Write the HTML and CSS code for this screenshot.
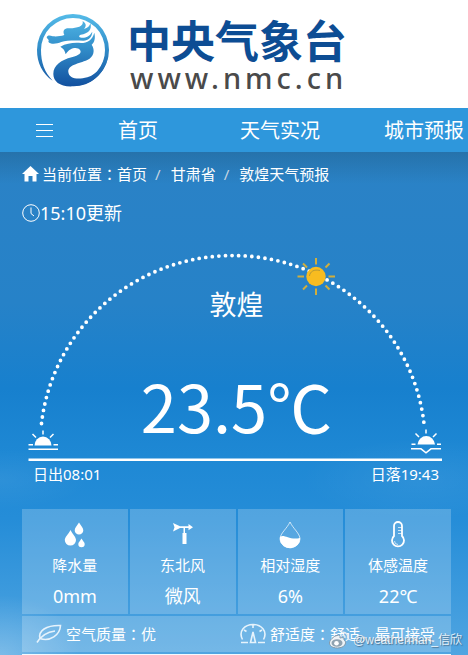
FILE: index.html
```html
<!DOCTYPE html>
<html lang="zh-CN">
<head>
<meta charset="utf-8">
<meta name="viewport" content="width=device-width, initial-scale=1">
<title>敦煌天气预报</title>
<link rel="stylesheet" href="styles.css">
</head>
<body>
<header class="brand">
  <svg class="brand-mark" viewBox="108 39 222 222" aria-hidden="true">
    <defs>
      <linearGradient id="mark" gradientUnits="userSpaceOnUse" x1="0" y1="42" x2="0" y2="260">
        <stop offset="0" stop-color="#55bbe8"/>
        <stop offset=".45" stop-color="#3390cb"/>
        <stop offset="1" stop-color="#12509f"/>
      </linearGradient>
    </defs>
    <g fill="url(#mark)">
      <path d="M158 242C127 222 111 188 111 150A108 108 0 0 1 327 150A108 108 0 0 1 219 258L232 246A96 96 0 0 0 315 150A96 96 0 0 0 123 150C123 187 133 216 158 242Z"/>
      <path d="M181 140C200 130 220 127 243 129C262 129 277 120 283 98C287 115 283 127 275 134C286 150 282 170 262 180C235 192 204 194 205 216C207 236 232 240 262 232C292 222 308 200 315 168L324 172C312 225 270 260 219 259C180 261 160 245 160 222C160 195 185 180 215 172C238 166 246 158 240 150C232 140 210 142 197 163C195 152 190 145 181 140Z"/>
      <path d="M140 112C142 105 150 106 158 109C170 110 181 109 193 105C186 90 195 83 210 85C230 84 252 80 248 63C260 70 259 80 252 87C263 84 270 78 271 69C277 89 265 101 242 104C233 109 238 114 252 113C264 112 271 104 277 95C276 112 266 121 250 122C225 121 198 121 184 126C168 133 150 133 145 125C149 120 142 118 140 112Z"/>
    </g>
  </svg>
  <div class="brand-text">
    <h1 class="brand-name">中央气象台</h1>
    <p class="brand-url">www.nmc.cn</p>
  </div>
</header>

<nav class="menu">
  <button class="menu-toggle" type="button" aria-label="菜单">
    <svg viewBox="0 0 17 14" aria-hidden="true"><path d="M0 .500h17M0 6.500h17M0 12.500h17"/></svg>
  </button>
  <a href="#home">首页</a>
  <a href="#live">天气实况</a>
  <a href="#city">城市预报</a>
</nav>

<main class="weather">
  <div class="crumbs">
    <svg class="home" viewBox="0 0 17 16" aria-hidden="true"><path d="M8.500 0L17 8H14.500V15.500H10.500V10H6.500V15.500H2.500V8H0Z"/></svg>
    <span>当前位置<span class="colon" lang="zh-TW">：</span><a href="#home">首页</a></span>
    <span class="slash">/</span>
    <a href="#gansu">甘肃省</a>
    <span class="slash">/</span>
    <a href="#dunhuang">敦煌天气预报</a>
  </div>
  <p class="updated">
    <svg class="clock" viewBox="0 0 18 18" aria-hidden="true"><circle cx="9" cy="9" r="8.300"/><path d="M9 3.500V9.500L12 12"/></svg>15:10更新
  </p>

  <section class="dial">
    <svg class="dial-art" viewBox="22 240 429 222" aria-hidden="true">
      <path class="orbit" d="M41.500 423.500A192.500 189.500 0 0 1 424 423.500"/>
      <path class="horizon" d="M28.500 459.800H442"/>
      <g class="sun">
        <path d="M316 258v6.500M316 288.500v6.500M297.500 276.500h6.500M328.500 276.500h6.500M303 263.500l4 4M325.500 285.500l4 4M329.500 263.500l-4 4M307 285.500l-4 4"/>
        <circle cx="316" cy="276.500" r="9.700"/>
        <path class="sun-glint" d="M309.500 276C310 271.500 314 269 320 270.500"/>
      </g>
      <g class="rise">
        <path class="solid" d="M34.500 445.500A8.500 9 0 0 1 51.500 445.500Z"/>
        <path d="M43 430.500v4M32.500 434l3.500 3.500M53.500 434l-3.500 3.500M28.500 444.800h4.500M53.500 444.800h4.500M28.500 449.300h29.500"/>
      </g>
      <g class="rise">
        <path class="solid" d="M417.500 444.500A8.800 9.500 0 0 1 435 444.500Z"/>
        <path d="M426 429.500v4M415.500 433.500l3.500 3.500M436.500 433.500l-3.500 3.500M411.500 444.200h4M437 444.200h4M411 448.800h10l5 4 5-4h10"/>
      </g>
    </svg>
    <div class="reading">
      <h2 class="city">敦煌</h2>
      <p class="temp">23.5℃</p>
    </div>
  </section>
  <div class="sun-times"><span>日出08:01</span><span>日落19:43</span></div>

  <ul class="facts">
    <li>
      <svg viewBox="0 0 26 28" aria-hidden="true"><path class="solid" d="M8.500 9C11 14 14 16 14 19a5.600 5.600 0 0 1-11.200 0C2.800 16 6 14 8.500 9ZM17 1.500C19 5 21.300 7 21.300 9.200a4.300 4.300 0 0 1-8.600 0C12.700 7 15 5 17 1.500ZM19.500 17.500C21 20 22.700 21.500 22.700 23a3.200 3.200 0 0 1-6.400 0C16.300 21.500 18 20 19.500 17.500Z"/></svg>
      <span class="label">降水量</span><span class="value">0mm</span>
    </li>
    <li>
      <svg viewBox="0 0 26 28" aria-hidden="true"><path class="solid" d="M3 2L10 5.300H18.500V3L23 6.200L18.500 9.300V7H15V12H16.500V23H12.500V12H13.500V7H10L3 10.500L4.500 6.200Z"/></svg>
      <span class="label">东北风</span><span class="value">微风</span>
    </li>
    <li>
      <svg viewBox="0 0 26 28" aria-hidden="true"><path class="thin" d="M13 1C16 7.500 23 12.500 23 18a10 8.500 0 0 1-20 0C3 12.500 10 7.500 13 1Z"/><path class="solid" d="M3 16C7 12.500 12 19.500 23 17a10 9.200 0 0 1-20 2Z"/></svg>
      <span class="label">相对湿度</span><span class="value">6%</span>
    </li>
    <li>
      <svg viewBox="0 0 26 28" aria-hidden="true"><path class="thick" d="M9 15V5a4 4 0 0 1 8 0V15a6 6 0 1 1-8 0Z"/><path class="thin" d="M13 6.500h4M13 9.500h4M13 12.500h4M9.500 20a3.600 3.600 0 0 0 3.500 3.500"/></svg>
      <span class="label">体感温度</span><span class="value">22℃</span>
    </li>
  </ul>

  <div class="notes">
    <p>
      <svg viewBox="0 0 26 22" aria-hidden="true"><path d="M1 19.500C5 13 11 9 19 8M4 15.500C2 8 10 2 24.500 2.500C24 12 14 19 4 15.500"/></svg>
      <span>空气质量<span class="colon" lang="zh-TW">：</span>优</span>
    </p>
    <p>
      <svg viewBox="0 0 26 22" aria-hidden="true"><path d="M2.500 16.500C-2 8 5 1.500 13 1.500S28 8 23.500 16.500M1 19.500H8M18 19.500H25M13 2v3M4 7l2.500 1.500M22 7l-2.500 1.500M10.500 19.500L13 9L15.500 19.500Z"/></svg>
      <span>舒适度<span class="colon" lang="zh-TW">：</span>舒适，最可接受</span>
    </p>
  </div>
  <div class="forecast"></div>
</main>

<div class="credit">
  <svg viewBox="0 0 20 18" aria-hidden="true">
    <path class="credit-body" d="M8 4.500C10 3.500 11.500 4.500 11 7C14 6 15.500 7 15 9C18 10.500 17 16.800 8.500 17C3 17 .500 14.500 .500 12C.500 9 5 5 8 4.500Z"/>
    <ellipse class="credit-eye" cx="8" cy="12" rx="5.500" ry="3.800"/>
    <circle class="credit-pupil" cx="7.500" cy="12.300" r="2.300"/>
    <path class="credit-wave" d="M13 1.500C17 .500 19.500 4 18.300 7.500M13.500 4.500C15.500 4 16.300 5.300 15.800 7"/>
  </svg>
  <span>@weatherman_信欣</span>
</div>
</body>
</html>
```

FILE: styles.css
```css
* {
  box-sizing: border-box;
  margin: 0;
  padding: 0;
}

html,
body {
  height: 100%;
}

body {
  position: relative;
  display: flex;
  flex-direction: column;
  overflow: hidden;
  background: #fff;
  color: #fff;
  font-family: "Noto Sans", "Noto Sans CJK SC", sans-serif;
  font-size: 15px;
  line-height: 24px;
}

a {
  color: inherit;
  text-decoration: none;
}

svg {
  display: block;
  fill: none;
  stroke: none;
}

.brand {
  display: flex;
  flex: none;
  align-items: flex-start;
  gap: 17px;
  padding: 13px 36px 18px;
}

.brand-mark {
  width: 74px;
  height: 74px;
}

.brand-text {
  padding-top: 3px;
}

.brand-name {
  color: #0d4d94;
  font-size: 44px;
  font-weight: 700;
  line-height: 50px;
}

.brand-url {
  padding-left: 3px;
  color: #4a4a4a;
  font-size: 29px;
  font-weight: 500;
  letter-spacing: 4px;
  line-height: 24px;
}

.menu {
  display: grid;
  flex: none;
  grid-template-columns: 82fr 122fr 144fr 84fr;
  align-items: center;
  padding: 2px 0 0 36px;
  background: #2e97dc;
  font-size: 20px;
  line-height: 42px;
  white-space: nowrap;
}

.menu-toggle {
  width: 17px;
  border: 0;
  background: none;
}

.menu-toggle svg {
  width: 17px;
  height: 14px;
  stroke: #fff;
}

.weather {
  display: flex;
  flex: 1;
  flex-direction: column;
  padding: 10px 17px 0 22px;
  background:
    linear-gradient(rgba(30, 90, 130, .4), rgba(30, 90, 130, 0) 32px),
    radial-gradient(ellipse 80px 60px at 0 100%, rgba(255, 255, 255, .25), transparent),
    radial-gradient(ellipse 120px 40px at 90% 65%, rgba(255, 255, 255, .06), transparent),
    radial-gradient(ellipse 90px 30px at 0 65%, rgba(255, 255, 255, .06), transparent),
    linear-gradient(#2b82c6, #2682c8 30%, #1780ce 47%, #1e88d4 60%, #258dd8 73%, #50a5e1);
}

.crumbs {
  display: flex;
  align-items: center;
}

.home {
  width: 17px;
  height: 16px;
  margin-right: 3px;
  fill: #fff;
}

.colon {
  font-family: "Noto Sans CJK TC", sans-serif;
}

.slash {
  padding: 0 10px 0 8px;
  color: #c5d5e2;
}

.updated {
  display: flex;
  align-items: center;
  margin-top: 15px;
  font-size: 18px;
}

.clock {
  width: 18px;
  height: 18px;
  stroke: #fff;
}

.dial {
  display: grid;
  margin-top: 15px;
}

.dial-art,
.reading {
  grid-area: 1 / 1;
}

.dial-art {
  width: 100%;
}

.orbit {
  stroke: #fff;
  stroke-dasharray: 0 6.610;
  stroke-linecap: round;
  stroke-width: 3.800;
}

.horizon {
  stroke: #fff;
  stroke-width: 2.400;
}

.sun {
  fill: #f8bc20;
  stroke: #d0ae3d;
  stroke-width: 2;
}

.sun circle {
  stroke: none;
}

.sun-glint {
  fill: none;
  stroke: #b59836;
  stroke-width: 1;
}

.rise {
  stroke: #fff;
  stroke-width: 1.500;
}

.solid {
  fill: #fff;
  stroke: none;
}

.reading {
  padding-top: 45px;
  text-align: center;
}

.city {
  font-size: 27px;
  font-weight: 400;
  line-height: 40px;
}

.temp {
  margin-top: 40px;
  font-family: "Noto Sans CJK SC", sans-serif;
  font-size: 65px;
  line-height: 80px;
}

.sun-times {
  display: flex;
  justify-content: space-between;
  padding: 0 12px 0 11px;
}

.facts {
  display: grid;
  grid-template-columns: repeat(4, 1fr);
  gap: 2px;
  margin-top: 23px;
  list-style: none;
}

.facts li {
  display: flex;
  flex-direction: column;
  align-items: center;
  padding: 12px 0 6px;
  background: rgba(255, 255, 255, .21);
}

.facts svg {
  width: 26px;
  height: 28px;
}

.thin,
.thick {
  stroke: #fff;
}

.thin {
  stroke-width: 1;
  stroke-opacity: .7;
}

.thick {
  stroke-width: 1.800;
}

.label {
  margin-top: 4px;
}

.value {
  margin-top: 7px;
  font-size: 18px;
}

.notes {
  display: grid;
  grid-template-columns: 204fr 211fr;
  margin-top: 2px;
  padding: 6px 0 6px 14px;
  background: rgba(255, 255, 255, .21);
  white-space: nowrap;
}

.notes p {
  display: flex;
  align-items: center;
  gap: 4px;
}

.notes svg {
  width: 26px;
  height: 22px;
  stroke: #e6f3fc;
  stroke-width: 1.600;
}

.forecast {
  flex: 1;
  margin-top: 2px;
  background: #f4f9fd;
}

.credit {
  position: absolute;
  right: 6px;
  bottom: 3px;
  display: flex;
  align-items: center;
  gap: 4px;
  color: rgba(255, 255, 255, .85);
  font-family: "Liberation Sans", "Noto Sans CJK SC", sans-serif;
  font-size: 12px;
  text-shadow: 1px 1px 1px rgba(50, 70, 90, .6);
}

.credit svg {
  width: 20px;
  height: 18px;
}

.credit-body {
  fill: #eef3f7;
  stroke: #8298a9;
  stroke-width: 1;
}

.credit-eye {
  fill: #8fa2b0;
}

.credit-pupil {
  fill: #fff;
}

.credit-wave {
  stroke: #e3eaf0;
  stroke-width: 1.500;
}
```
